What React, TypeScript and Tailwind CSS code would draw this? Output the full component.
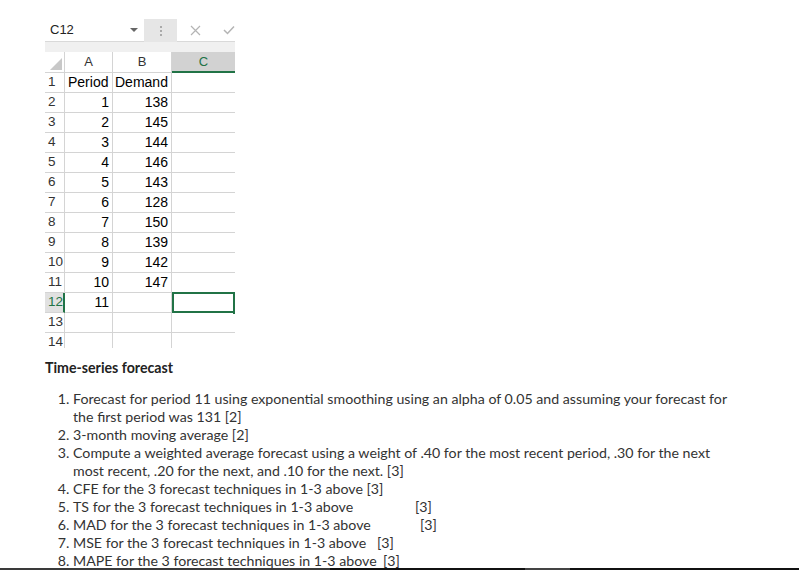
const rows: { a: string; b: string }[] = [
    { a: 'Period', b: 'Demand' },
    { a: '1', b: '138' },
    { a: '2', b: '145' },
    { a: '3', b: '144' },
    { a: '4', b: '146' },
    { a: '5', b: '143' },
    { a: '6', b: '128' },
    { a: '7', b: '150' },
    { a: '8', b: '139' },
    { a: '9', b: '142' },
    { a: '10', b: '147' },
    { a: '11', b: '' },
    { a: '', b: '' },
    { a: '', b: '' },
];

const Sheet = () => {
    return (
        <div className="w-[190px] h-[329px] overflow-hidden font-['Liberation_Sans',sans-serif] text-[14px] text-black">
            {/* formula bar */}
            <div className="flex h-[23px]">
                <div className="w-[100px] bg-white flex items-center justify-between pl-[5px] pr-[6px] border-b border-[#d9d9d9]">
                    <span className="text-[13px] text-[#222]">C12</span>
                    <span className="w-0 h-0 border-l-[4px] border-r-[4px] border-t-[4px] border-l-transparent border-r-transparent border-t-[#666]" />
                </div>
                <div className="w-[33px] bg-[#e6e6e6] flex items-center justify-center">
                    <span className="flex flex-col gap-[2px]">
                        <span className="w-[2px] h-[2px] bg-[#aaa]" />
                        <span className="w-[2px] h-[2px] bg-[#aaa]" />
                        <span className="w-[2px] h-[2px] bg-[#aaa]" />
                    </span>
                </div>
                <div className="flex-1 bg-white flex items-center gap-[22px] pl-[13px] border-b border-[#d9d9d9]">
                    <svg width="11" height="11" viewBox="0 0 11 11">
                        <path d="M1 1L10 10M10 1L1 10" stroke="#b4b4b4" strokeWidth="1.2" />
                    </svg>
                    <svg width="12" height="10" viewBox="0 0 12 10">
                        <path d="M1 5L4.5 8.5L11 1.5" stroke="#b4b4b4" strokeWidth="1.5" fill="none" />
                    </svg>
                </div>
            </div>
            <div className="h-[10px] bg-[#f0f0f0]" />

            {/* column headers */}
            <div className="flex h-[21px] bg-white">
                <div className="w-[20px] border-r border-b border-[#d4d4d4] flex items-end justify-end p-[2px]">
                    <svg width="12" height="12" viewBox="0 0 12 12">
                        <path d="M12 0L12 12L0 12Z" fill="#c8c8c8" />
                    </svg>
                </div>
                <div className="w-[48px] border-r border-b border-[#d4d4d4] flex items-center justify-center text-[#333] text-[13px]">A</div>
                <div className="w-[59px] border-r border-b border-[#d4d4d4] flex items-center justify-center text-[#333] text-[13px]">B</div>
                <div className="flex-1 bg-[#d2d2d2] border-b-2 border-[#217346] flex items-center justify-center text-[#217346] text-[13px]">C</div>
            </div>

            {rows.map((r, i) => {
                const sel = i === 11;
                return (
                    <div key={i} className="flex h-[20px] bg-white">
                        <div
                            className={`w-[20px] border-b border-[#d4d4d4] flex items-center pl-[3px] text-[13.5px] ${
                                sel ? 'bg-[#e1e1e1] text-[#217346] border-r-2 border-r-[#217346]' : 'text-[#333] border-r'
                            }`}
                        >
                            {i + 1}
                        </div>
                        <div className={`w-[48px] border-r border-b border-[#d4d4d4] flex items-center pr-[3px] ${i === 0 ? 'justify-start pl-[3px]' : 'justify-end'}`}>
                            {r.a}
                        </div>
                        <div className={`w-[59px] border-r border-b border-[#d4d4d4] flex items-center pr-[3px] ${i === 0 ? 'justify-start pl-[2px]' : 'justify-end'}`}>
                            {r.b}
                        </div>
                        {sel ? (
                            <div className="flex-1 relative border-2 border-[#217346] -mt-[1px] h-[21px]">
                                <span className="absolute -right-[2px] -bottom-[3px] w-[2px] h-[4px] bg-[#217346]" />
                            </div>
                        ) : (
                            <div className="flex-1 border-b border-[#d4d4d4]" />
                        )}
                    </div>
                );
            })}
        </div>
    );
};

const App = () => {
    return (
        <div className="w-[799px] h-[570px] bg-white relative overflow-hidden">
            <div className="pl-[45px] pt-[19px]">
                <Sheet />
            </div>

            <div className="pl-[45px] mt-[11px] font-['Lato',sans-serif] text-[14.2px] leading-[18px] text-[#333]">
                <h3 className="font-bold text-[#222]">Time-series forecast</h3>
                <ol className="mt-[13px] pl-[28px] list-decimal">
                    <li>
                        Forecast for period 11 using exponential smoothing using an alpha of 0.05 and assuming your forecast for
                        <br />
                        the first period was 131 [2]
                    </li>
                    <li>3-month moving average [2]</li>
                    <li>
                        Compute a weighted average forecast using a weight of .40 for the most recent period, .30 for the next
                        <br />
                        most recent, .20 for the next, and .10 for the next. [3]
                    </li>
                    <li>CFE for the 3 forecast techniques in 1-3 above [3]</li>
                    <li>
                        <span className="inline-block w-[342px]">TS for the 3 forecast techniques in 1-3 above</span>[3]
                    </li>
                    <li>
                        <span className="inline-block w-[347px]">MAD for the 3 forecast techniques in 1-3 above</span>[3]
                    </li>
                    <li>
                        <span className="inline-block w-[304px]">MSE for the 3 forecast techniques in 1-3 above</span>[3]
                    </li>
                    <li>
                        <span className="inline-block w-[310px]">MAPE for the 3 forecast techniques in 1-3 above</span>[3]
                    </li>
                </ol>
            </div>

            <div className="absolute left-0 right-0 bottom-0 h-[2px] flex">
                <div className="w-[330px] bg-[#3a3a3a]" />
                <div className="w-[195px] bg-[#111]" />
                <div className="w-[45px] bg-[#444]" />
                <div className="flex-1 bg-[#111]" />
            </div>
        </div>
    );
};

export default App;
